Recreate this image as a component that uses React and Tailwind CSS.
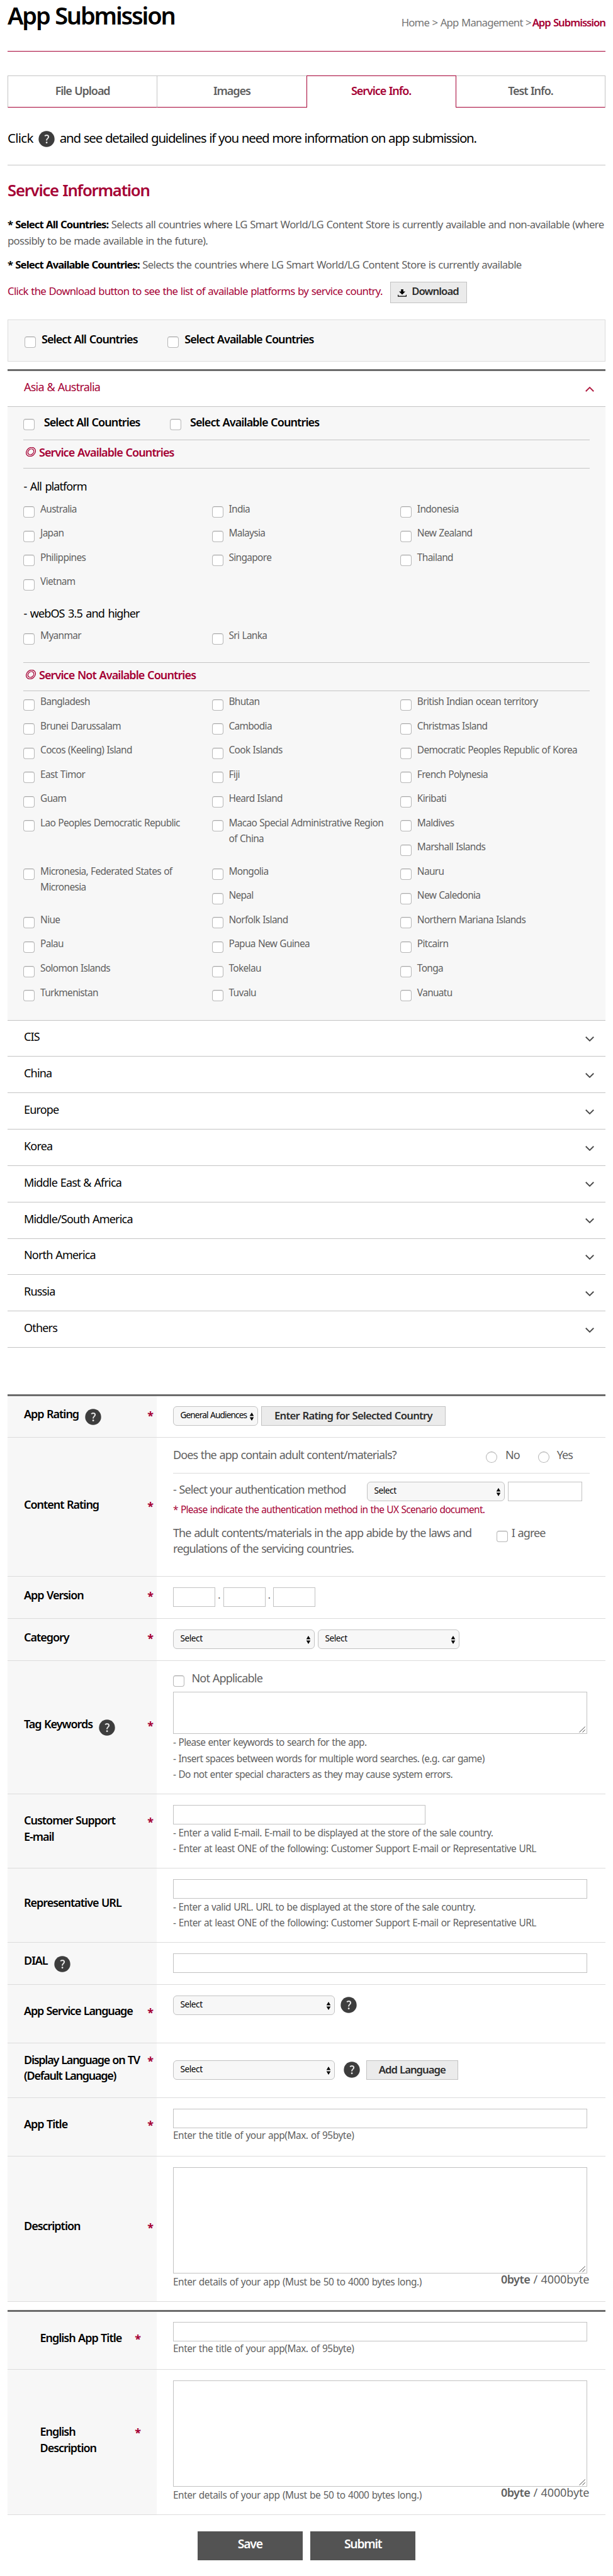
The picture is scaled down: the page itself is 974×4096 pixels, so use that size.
import React from "react";
import { clsx } from "clsx";

function HelpIcon({ className }) {
  return (
    <svg viewBox="0 0 26 26" className={clsx("h-[26px] w-[26px] shrink-0", className)} aria-hidden="true">
      <circle cx="13" cy="13" r="12.7" fill="#3d3d3d" />
      <path
        d="M10.2 8.4C11 7.3 12.2 6.9 13.3 7C15 7.1 16.2 8.2 16.1 9.8C16 11.9 13.2 12.4 13.1 14.8V15.4"
        fill="none"
        stroke="#e8e8e8"
        strokeWidth="2"
      />
      <circle cx="13.1" cy="18.7" r="1.4" fill="#e8e8e8" />
    </svg>
  );
}

function Chevron({ up }) {
  return (
    <svg viewBox="0 0 14 8" className={clsx("h-2 w-3.5 shrink-0", up && "rotate-180")} aria-hidden="true">
      <path d="M0.8 0.8L7 6.9L13.2 0.8" fill="none" stroke={up ? "#b01a40" : "#4a4a4a"} strokeWidth="1.9" />
    </svg>
  );
}

function Rings() {
  return (
    <svg viewBox="0 0 16 15" className="mt-[5.5px] h-[15px] w-4 shrink-0" fill="none" stroke="#a50034" aria-hidden="true">
      <ellipse cx="8" cy="7.5" rx="7.9" ry="6.5" strokeWidth="1.3" transform="rotate(-40 8 7.5)" />
      <ellipse cx="8" cy="7.5" rx="5.1" ry="4.1" strokeWidth="1.3" transform="rotate(-40 8 7.5)" />
    </svg>
  );
}

function Arrows() {
  return (
    <svg viewBox="0 0 8 13" className="mt-0.5 h-[13px] w-2 shrink-0" aria-hidden="true">
      <path d="M4 0L7.3 5.4H0.7ZM4 13L7.3 7.6H0.7Z" fill="#000" />
    </svg>
  );
}

const Check = ({ className, round }) => (
  <span
    className={clsx(
      "block h-[18px] w-[18px] shrink-0 border border-[#b8b8b8] border-t-[#a6a6a6] bg-white shadow-[inset_0_1px_1px_rgba(0,0,0,0.08)]",
      round ? "rounded-full" : "rounded-[4px]",
      className
    )}
  />
);

const Select = ({ label = "Select", className, text = "tracking-[-0.03em]" }) => (
  <div
    className={clsx(
      "flex h-[31px] shrink-0 justify-between rounded-[6px] border border-[#c2c2c2] bg-[#f7f7f7] pr-[5px] pl-[10.4px] pt-[3.5px] text-[13.6px] leading-[19px] text-black",
      className
    )}
  >
    <span className={clsx("whitespace-nowrap", text)}>{label}</span>
    <span className="pt-[3.5px]">
      <Arrows />
    </span>
  </div>
);

const Input = ({ className }) => <div className={clsx("h-[31px] shrink-0 border border-[#c2c2c2] bg-white", className)} />;

const TextArea = ({ className }) => (
  <div className={clsx("flex w-[658px] items-end justify-end border border-[#c2c2c2] bg-white pr-px pb-px", className)}>
    <svg viewBox="0 0 11 10" className="h-2.5 w-[11px]" stroke="#4a4a4a" strokeWidth="1" aria-hidden="true">
      <path d="M0.5 9.5L9.8 0.5M5.5 9.5L9.8 5.3" fill="none" />
    </svg>
  </div>
);

const Button = ({ children, className }) => (
  <div
    className={clsx(
      "flex shrink-0 justify-center border border-[#c2c2c2] bg-[#ebebeb] text-[16.7px] leading-[25.7px] font-semibold whitespace-nowrap text-[#2d2d2d]",
      className
    )}
  >
    {children}
  </div>
);

const Help = ({ children, className }) => (
  <p className={clsx("text-[15.4px] leading-[25.7px] whitespace-nowrap text-[#5f5f5f]", className)}>
    <span className="-mb-px block pt-px">{children}</span>
  </p>
);

function BulkSelect({ second, gap, className }) {
  return (
    <div className={clsx("flex text-[18px] leading-[26px] font-semibold tracking-[-0.05em] whitespace-nowrap text-black", className)}>
      <Check className="mt-[9.5px]" />
      <span className={clsx(second, "pt-[0.6px]")}>Select All Countries</span>
      <Check className={clsx("mt-[9.5px]", gap)} />
      <span className={clsx(second, "pt-[0.6px]")}>Select Available Countries</span>
    </div>
  );
}

const SectionTitle = ({ children }) => (
  <div className="flex h-[45px] gap-[4.5px] border-b border-[#c4c4c4] pt-1.5 pl-1 text-[18px] leading-[26px] font-semibold tracking-[-0.05em] text-[#a50034]">
    <Rings />
    <span className="pt-[0.6px]">{children}</span>
  </div>
);

const Platform = ({ children, className }) => (
  <div className={clsx("text-[18px] leading-[26px] tracking-[-0.051em] text-black [word-spacing:0.1em]", className)}>{children}</div>
);

function Country({ name, className }) {
  return (
    <div className={clsx("flex gap-[8.7px] text-[15.4px] leading-[25.7px] tracking-[-0.042em] text-[#5f5f5f]", className)}>
      <Check className="mt-[9.6px]" />
      <span className="pt-px">{name}</span>
    </div>
  );
}

const allPlatform = [
  "Australia", "India", "Indonesia", "Japan", "Malaysia", "New Zealand", "Philippines", "Singapore", "Thailand", "Vietnam",
];

const notAvailable = [
  ["Bangladesh"], ["Bhutan"], ["British Indian ocean territory"],
  ["Brunei Darussalam"], ["Cambodia"], ["Christmas Island"],
  ["Cocos (Keeling) Island"], ["Cook Islands"], ["Democratic Peoples Republic of Korea"],
  ["East Timor"], ["Fiji"], ["French Polynesia"],
  ["Guam"], ["Heard Island"], ["Kiribati"],
  ["Lao Peoples Democratic Republic", "row-span-2"], ["Macao Special Administrative Region of China", "row-span-2"], ["Maldives"],
  ["Marshall Islands"],
  ["Micronesia, Federated States of Micronesia", "row-span-2"], ["Mongolia"], ["Nauru"],
  ["Nepal"], ["New Caledonia"],
  ["Niue"], ["Norfolk Island"], ["Northern Mariana Islands"],
  ["Palau"], ["Papua New Guinea"], ["Pitcairn"],
  ["Solomon Islands"], ["Tokelau"], ["Tonga"],
  ["Turkmenistan"], ["Tuvalu"], ["Vanuatu"],
];

const regions = [
  "CIS", "China", "Europe", "Korea", "Middle East & Africa", "Middle/South America", "North America", "Russia", "Others",
];

const tabs = ["File Upload", "Images", "Service Info.", "Test Info."];

function Row({ label, help, helpClass, star, height, pad, nested, tracking = "tracking-[-0.057em]", children }) {
  return (
    <div className={clsx("flex border-b border-[#dcdcdc]", height)}>
      <div
        className={clsx(
          "flex w-[237px] shrink-0 items-start bg-[#f7f7f7] text-[18px] leading-[25.7px] font-semibold text-black",
          nested ? "pr-[25px] pl-[51.5px]" : "pr-[5px] pl-[26px]",
          pad
        )}
      >
        <span className={clsx("pt-[0.6px] whitespace-pre", tracking)}>{label}</span>
        {help && <HelpIcon className={clsx("ml-[10px]", helpClass)} />}
        {star && <span className="mt-[3px] ml-auto text-[18px] font-bold text-[#a50034]">*</span>}
      </div>
      <div className="flex-1 pl-[26px]">{children}</div>
    </div>
  );
}

const Details = () => (
  <div className="flex justify-between pr-[25.6px]">
    <Help className="tracking-[-0.029em]">Enter details of your app (Must be 50 to 4000 bytes long.)</Help>
    <p className="-mt-[3px] text-[18px] leading-[25.7px] tracking-[-0.006em] text-[#5f5f5f]">
      <span className="font-semibold tracking-[-0.03em]">0byte</span> / 4000byte
    </p>
  </div>
);

export default function App() {
  return (
    <div className="h-[4096px] w-[974px] overflow-hidden bg-white pr-3 pl-3 font-['Noto_Sans','Open_Sans',sans-serif] [word-spacing:0.05em] antialiased">
      <header className="flex h-[82px] justify-between border-b border-[#a50034]">
        <h1 className="text-[38px] leading-[48px] font-semibold tracking-[-0.057em] text-black">App Submission</h1>
        <nav className="flex pt-[23.3px] text-[16.7px] leading-[26px] whitespace-nowrap text-[#757575]">
          <span className="w-[208px] tracking-[-0.045em]">Home &gt; App Management &gt;</span>
          <span className="font-semibold tracking-[-0.06em] text-[#a50034]">App Submission</span>
        </nav>
      </header>

      <div className="mt-[38px] flex h-[51px] text-center text-[18px] leading-[26px] font-semibold tracking-[-0.059em]">
        {tabs.map((t, i) => (
          <div
            key={t}
            className={clsx(
              "flex-1 border-t pt-[9.5px]",
              t === "Service Info."
                ? "border-x border-[#a50034] text-[#a50034]"
                : "border-b border-t-[#c4c4c4] border-b-[#a50034] text-[#5f5f5f]",
              i < 2 && "border-l border-l-[#c4c4c4]",
              i === 3 && "border-r border-r-[#c4c4c4]"
            )}
          >
            {t}
          </div>
        ))}
      </div>

      <div className="flex h-[92px] border-b border-[#c4c4c4] pt-[34.7px] text-[20.5px] leading-[26px] whitespace-nowrap text-black">
        <span className="tracking-[-0.036em]">Click</span>
        <HelpIcon className="mt-[2.5px] mr-[8px] ml-[8px]" />
        <span className="tracking-[-0.059em]">and see detailed guidelines if you need more information on app submission.</span>
      </div>

      <h2 className="pt-[23.3px] text-[25.7px] leading-[34px] font-semibold tracking-[-0.048em] text-[#a50034]">Service Information</h2>
      <div className="mt-[23.7px] text-[16.7px] leading-[25.7px] tracking-[-0.039em] text-[#5f5f5f]">
        <p>
          <span className="font-bold tracking-[-0.055em] text-black">* Select All Countries:</span> Selects all countries where LG
          Smart World/LG Content Store is currently available and non-available (where
          <br />
          possibly to be made available in the future).
        </p>
        <p className="mt-[12.6px]">
          <span className="font-bold tracking-[-0.055em] text-black">* Select Available Countries:</span> Selects the countries where
          LG Smart World/LG Content Store is currently available
        </p>
        <div className="mt-[14.7px] flex h-[33.4px] text-[#a50034]">
          <span className="w-[607.5px] pt-[1.5px] whitespace-nowrap">
            Click the Download button to see the list of available platforms by service country.
          </span>
          <Button className="h-[33.4px] w-[122px] gap-2">
            <svg viewBox="0 0 14 12" className="mt-[10.5px] h-3 w-3.5" aria-hidden="true">
              <path d="M5.2 0H8.8V3.4H12L7 8.6L2 3.4H5.2Z" fill="#000" />
              <path d="M0.6 8.8V11.2H13.4V8.8" fill="none" stroke="#000" strokeWidth="1.2" />
            </svg>
            <span className="pt-[0.6px] tracking-[-0.054em]">Download</span>
          </Button>
        </div>
      </div>

      <BulkSelect
        second="w-[161px] ml-[9.3px]"
        gap="ml-[39px]"
        className="mt-[25.9px] h-[67px] border border-[#dcdcdc] bg-[#f7f7f7] pt-[16.4px] pl-[25.6px]"
      />

      <div className="mt-3 border-t-[3px] border-[#6b6b6b]">
        <div className="flex h-[57px] justify-between border-b border-[#c4c4c4] pt-[12px] pr-[18.5px] pl-[26px] text-[18px] leading-[26px] tracking-[-0.042em] text-[#a50034]">
          Asia &amp; Australia
          <span className="pt-[13px]">
            <Chevron up />
          </span>
        </div>

        <div className="h-[976px] border-b border-[#c4c4c4] bg-[#f7f7f7] px-[25.4px]">
          <BulkSelect second="w-[161px] ml-[14.3px]" gap="ml-[39px]" className="h-[53px] border-b border-[#c4c4c4] pt-[10.3px]" />
          <SectionTitle>Service Available Countries</SectionTitle>
          <div className="h-[309px] border-b border-[#c4c4c4] pt-[15.5px]">
            <Platform>- All platform</Platform>
            <div className="mt-[9.5px] grid auto-rows-[38.56px] grid-cols-[299.4px_299.4px_299.4px]">
              {allPlatform.map((c) => (
                <Country key={c} name={c} />
              ))}
            </div>
            <Platform className="mt-[12.1px]">- webOS 3.5 and higher</Platform>
            <div className="mt-[9.5px] grid auto-rows-[38.56px] grid-cols-[299.4px_299.4px_299.4px]">
              <Country name="Myanmar" />
              <Country name="Sri Lanka" />
            </div>
          </div>
          <SectionTitle>Service Not Available Countries</SectionTitle>
          <div className="mt-[3.3px] grid auto-rows-[38.56px] grid-cols-[299.4px_299.4px_299.4px]">
            {notAvailable.map(([name, span]) => (
              <Country key={name} name={name} className={clsx("pr-4", span)} />
            ))}
          </div>
        </div>

        {regions.map((r) => (
          <div
            key={r}
            className="flex h-[57.84px] justify-between border-b border-[#c4c4c4] pt-[12.8px] pr-[18.5px] pl-[26px] text-[18px] leading-[26px] tracking-[-0.045em] text-black"
          >
            {r}
            <span className="pt-[12.6px]">
              <Chevron />
            </span>
          </div>
        ))}
      </div>

      <div className="mt-[73.4px] border-t-[3px] border-[#6b6b6b]">
        <Row label="App Rating" help helpClass="mt-[4.8px]" star height="h-[66px]" pad="pt-4">
          <div className="flex gap-[5px] pt-4">
            <Select label="General Audiences" text="tracking-[-0.062em]" className="w-[135px]" />
            <Button className="h-[31px] w-[293px] pt-[1.6px] leading-[23.7px] tracking-[-0.044em]">Enter Rating for Selected Country</Button>
          </div>
        </Row>
        <Row label="Content Rating" star height="h-[221px]" pad="pt-[94px]">
          <div className="w-[661.6px] text-[18px] leading-[25.7px] tracking-[-0.05em] whitespace-nowrap text-[#5f5f5f]">
            <div className="flex h-[57px] border-b border-[#dcdcdc] pt-[15px]">
              <span className="w-[497px]">Does the app contain adult content/materials?</span>
              <Check round className="mt-[7.3px]" />
              <span className="ml-[13px] w-[22px]">No</span>
              <Check round className="mt-[7.3px] ml-[29.7px]" />
              <span className="ml-3">Yes</span>
            </div>
            <div className="flex pt-[13px]">
              <span className="w-[308px] pt-[0.6px]">- Select your authentication method</span>
              <Select className="w-[219px]" />
              <Input className="ml-[5px] w-[118px]" />
            </div>
            <p className="mt-[1.2px] text-[15.4px] tracking-[-0.044em] text-[#a50034]">
              * Please indicate the authentication method in the UX Scenario document.
            </p>
            <div className="mt-[11.2px] flex">
              <p className="w-[513.8px]">
                The adult contents/materials in the app abide by the laws and
                <br />
                regulations of the servicing countries.
              </p>
              <Check className="mt-[9px]" />
              <span className="ml-1.5">I agree</span>
            </div>
          </div>
        </Row>
        <Row label="App Version" star height="h-[67px]" pad="pt-[16.8px]">
          <div className="flex pt-[17px] text-[15.4px] leading-[25px] text-[#5f5f5f]">
            <Input className="w-[67px]" />
            <span className="w-[12.6px] text-center">.</span>
            <Input className="w-[67px]" />
            <span className="w-[12.6px] text-center">.</span>
            <Input className="w-[67px]" />
          </div>
        </Row>
        <Row label="Category" star height="h-[67px]" pad="pt-[16.6px]">
          <div className="flex gap-[5px] pt-[17px]">
            <Select className="w-[225px]" />
            <Select className="w-[225px]" />
          </div>
        </Row>
        <Row label="Tag Keywords" help helpClass="mt-[5.5px]" star height="h-[212px]" pad="pt-[88px]">
          <div className="flex h-[49px] pt-[14.2px] text-[18px] leading-[26px] tracking-[-0.046em] text-[#5f5f5f]">
            <Check className="mt-[9px] mr-[11.5px]" />
            Not Applicable
          </div>
          <TextArea className="h-[67px]" />
          <Help className="mt-[0.3px] tracking-[-0.041em]">- Please enter keywords to search for the app.</Help>
          <Help className="tracking-[-0.041em]">- Insert spaces between words for multiple word searches. (e.g. car game)</Help>
          <Help className="tracking-[-0.041em]">- Do not enter special characters as they may cause system errors.</Help>
        </Row>
        <Row label={"Customer Support\nE-mail"} star height="h-[118px]" pad="pt-[29px]">
          <Input className="mt-[17px] w-[401px]" />
          <Help className="tracking-[-0.037em]">- Enter a valid E-mail. E-mail to be displayed at the store of the sale country.</Help>
          <Help className="tracking-[-0.035em]">- Enter at least ONE of the following: Customer Support E-mail or Representative URL</Help>
        </Row>
        <Row label="Representative URL" height="h-[118px]" pad="pt-[42.4px]">
          <Input className="mt-[17px] w-[658px]" />
          <Help className="tracking-[-0.037em]">- Enter a valid URL. URL to be displayed at the store of the sale country.</Help>
          <Help className="tracking-[-0.035em]">- Enter at least ONE of the following: Customer Support E-mail or Representative URL</Help>
        </Row>
        <Row label="DIAL" help helpClass="mt-[5.5px]" height="h-[67px]" pad="pt-[16.3px]">
          <Input className="mt-[17.5px] w-[658px]" />
        </Row>
        <Row label="App Service Language" tracking="tracking-[-0.063em]" star height="h-[93px]" pad="pt-[29.3px]">
          <div className="flex pt-[17px]">
            <Select className="w-[257px]" />
            <HelpIcon className="mt-[2.5px] ml-[9px]" />
          </div>
        </Row>
        <Row
          label={"Display Language on TV\n(Default Language)"}
          tracking="tracking-[-0.07em]"
          star
          height="h-[87px]"
          pad="pt-[13.6px]"
        >
          <div className="flex pt-[27px]">
            <Select className="w-[257px]" />
            <HelpIcon className="mt-[2.5px] mr-[10px] ml-[14px]" />
            <Button className="h-[31px] w-[145.5px] pt-[1.6px] leading-[23.7px] tracking-[-0.06em]">Add Language</Button>
          </div>
        </Row>
        <Row label="App Title" star height="h-[93px]" pad="pt-[28.6px]">
          <Input className="mt-[17px] w-[658px]" />
          <Help className="-mt-[1.6px] tracking-[-0.029em]">Enter the title of your app(Max. of 95byte)</Help>
        </Row>
        <Row label="Description" star height="h-[231px]" pad="pt-[98px]">
          <TextArea className="mt-[17px] h-[169.5px]" />
          <Details />
        </Row>
      </div>

      <div className="mt-[13px] border-t-[3px] border-[#6b6b6b]">
        <Row label="English App Title" nested star height="h-[92px]" pad="pt-[28.6px]">
          <Input className="mt-[16.5px] w-[658px]" />
          <Help className="-mt-[1.6px] tracking-[-0.029em]">Enter the title of your app(Max. of 95byte)</Help>
        </Row>
        <Row label={"English\nDescription"} nested star height="h-[231px]" pad="pt-[85.8px]">
          <TextArea className="mt-[17px] h-[169.5px]" />
          <Details />
        </Row>
      </div>

      <div className="mt-[26px] flex justify-center gap-[12.4px] text-center text-[19.3px] leading-[26px] font-semibold tracking-[-0.063em] text-white">
        <div className="h-[46.5px] w-[167px] bg-[#535353] pt-[7.6px]">Save</div>
        <div className="h-[46.5px] w-[167px] bg-[#535353] pt-[7.6px]">Submit</div>
      </div>
    </div>
  );
}
